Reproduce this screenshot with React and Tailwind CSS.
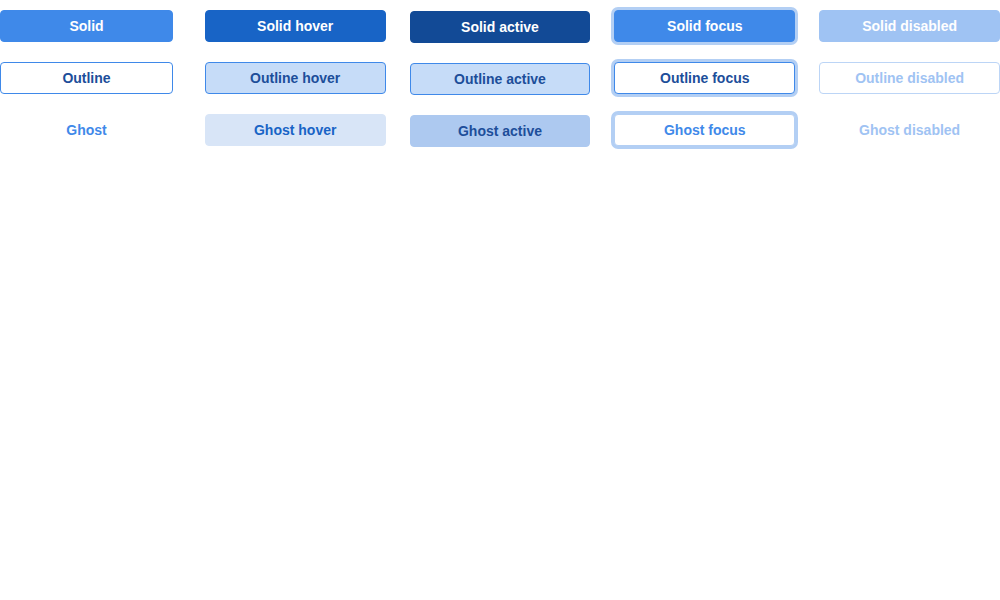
const base =
  "h-8 rounded-[4px] border text-sm font-bold flex items-center justify-center";

const rows = [
  [
    { label: "Solid", cls: "bg-[#3f89e9] border-[#3f89e9] text-white w-[173px]" },
    { label: "Solid hover", cls: "bg-[#1864c6] border-[#1864c6] text-white" },
    { label: "Solid active", cls: "bg-[#124a96] border-[#124a96] text-white translate-y-px" },
    { label: "Solid focus", cls: "bg-[#3f89e9] border-[#3f89e9] text-white ring-[3px] ring-[#b3cff4]" },
    { label: "Solid disabled", cls: "bg-[#9fc3f3] border-[#9fc3f3] text-white" },
  ],
  [
    { label: "Outline", cls: "bg-white border-[#3f89e9] text-[#1d4e9a] w-[173px]" },
    { label: "Outline hover", cls: "bg-[#c6dcf8] border-[#3f89e9] text-[#1d4e9a]" },
    { label: "Outline active", cls: "bg-[#c6dcf8] border-[#3f89e9] text-[#1d4e9a] translate-y-px" },
    { label: "Outline focus", cls: "bg-white border-[#3f89e9] text-[#1d4e9a] ring-[3px] ring-[#b3cff4]" },
    { label: "Outline disabled", cls: "bg-white border-[#bcd5f6] text-[#9fc3f3]" },
  ],
  [
    { label: "Ghost", cls: "bg-transparent border-transparent text-[#3f89e9] w-[173px]" },
    { label: "Ghost hover", cls: "bg-[#d8e5f7] border-[#d8e5f7] text-[#1864c6]" },
    { label: "Ghost active", cls: "bg-[#adc9f0] border-[#adc9f0] text-[#1d4e9a] translate-y-px" },
    { label: "Ghost focus", cls: "bg-white border-[#b3cff4] text-[#3f89e9] ring-[3px] ring-[#b3cff4]" },
    { label: "Ghost disabled", cls: "bg-transparent border-transparent text-[#9fc3f3]" },
  ],
];

export default function App() {
  return (
    <div
      className="w-[1000px] h-[600px] bg-white pt-[10px]"
      style={{ fontFamily: '"Liberation Sans", Arial, sans-serif' }}
    >
      <div className="grid grid-cols-5 gap-x-6 gap-y-5">
        {rows.flat().map((b) => (
          <button key={b.label} className={`${base} ${b.cls}`}>
            {b.label}
          </button>
        ))}
      </div>
    </div>
  );
}
